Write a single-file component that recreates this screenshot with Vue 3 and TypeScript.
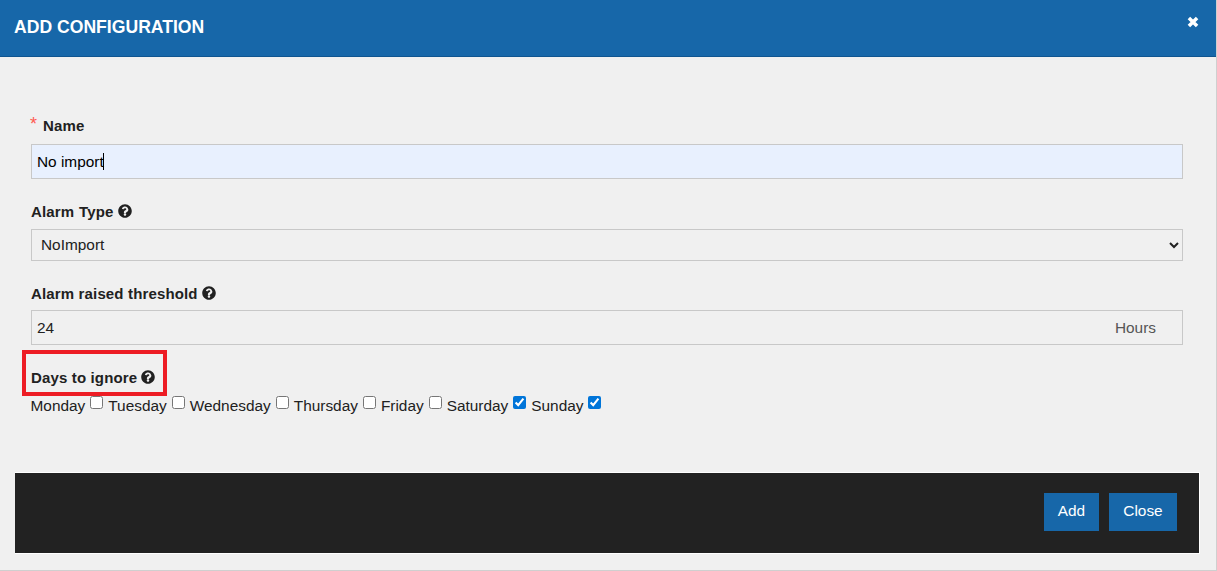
<script setup lang="ts">
import { ref } from 'vue';

const days = ref([
  { name: 'Monday', ignored: false },
  { name: 'Tuesday', ignored: false },
  { name: 'Wednesday', ignored: false },
  { name: 'Thursday', ignored: false },
  { name: 'Friday', ignored: false },
  { name: 'Saturday', ignored: true },
  { name: 'Sunday', ignored: true },
]);
const helpPath =
  'M504 256c0 137-111 248-248 248S8 393 8 256 119 8 256 8s248 111 248 248zM262.700 90c-54.500 0-89.300 23-116.500 63.800-3.500 5.300-2.400 12.400 2.700 16.300l34.700 26.300c5.200 3.900 12.600 3 16.700-2.100 17.900-22.700 30.100-35.800 57.300-35.800 20.400 0 45.700 13.100 45.700 33 0 15-12.400 22.700-32.600 34-23.600 13.200-54.800 29.700-54.800 70.900V320c0 6.600 5.400 12 12 12h56c6.600 0 12-5.400 12-12v-1.300c0-28.600 83.500-29.800 83.500-107.100C380 153.300 319.600 90 262.700 90zM256 339c-25.500 0-46.200 20.700-46.200 46.200 0 25.500 20.700 46.200 46.200 46.200s46.200-20.700 46.200-46.200c0-25.500-20.700-46.200-46.200-46.200z';
</script>

<template>
  <div class="modal">
    <header class="modal-header">
      <h1>ADD CONFIGURATION</h1>
      <svg class="close-icon" viewBox="0 0 12 12" aria-hidden="true">
        <path d="M2.500 2.500l7 7M9.500 2.500l-7 7" />
      </svg>
    </header>

    <form class="modal-body" @submit.prevent>
      <div class="field field-name">
        <label class="label"><span class="required">*</span>Name</label>
        <div class="name-wrap">
          <input class="input name-input" type="text" value="No import" readonly />
          <span class="caret"></span>
        </div>
      </div>

      <div class="field field-type">
        <label class="label">
          <span class="wide">Alarm Type</span>
          <svg class="help" viewBox="0 0 512 512" aria-hidden="true"><path :d="helpPath" /></svg>
        </label>
        <select class="input select">
          <option>NoImport</option>
        </select>
      </div>

      <div class="field field-threshold">
        <label class="label">
          Alarm raised threshold
          <svg class="help" viewBox="0 0 512 512" aria-hidden="true"><path :d="helpPath" /></svg>
        </label>
        <div class="input threshold">
          <span>24</span>
          <span class="unit">Hours</span>
        </div>
      </div>

      <div class="field field-days">
        <label class="label days-label">
          Days to ignore
          <svg class="help" viewBox="0 0 512 512" aria-hidden="true"><path :d="helpPath" /></svg>
          <span class="highlight"></span>
        </label>
        <div class="days">
          <label v-for="day in days" :key="day.name" class="day">
            {{ day.name }}
            <input v-model="day.ignored" type="checkbox" />
          </label>
        </div>
      </div>
    </form>

    <footer class="modal-footer">
      <button class="btn btn-add" type="button">Add</button>
      <button class="btn btn-close" type="button">Close</button>
    </footer>
  </div>
</template>

<style>
html,
body {
  margin: 0;
  background: #f0f0f0;
}
</style>

<style scoped>
.modal {
  box-sizing: border-box;
  width: 1217px;
  height: 571px;
  display: flex;
  flex-direction: column;
  background: #f0f0f0;
  border-right: 1px solid #cfcfcf;
  border-bottom: 1px solid #cfcfcf;
  color: #212121;
  font-family: 'Liberation Sans', Arial, sans-serif;
  font-size: 15.4px;
  overflow: hidden;
}
.modal-header {
  box-sizing: border-box;
  height: 57px;
  flex: none;
  margin-right: -1px;
  padding: 0 17px 0 14px;
  display: flex;
  align-items: center;
  justify-content: space-between;
  background: #1767a9;
  border-bottom: 1px solid #0f5590;
}
.modal-header h1 {
  margin: 0 0 2px;
  color: #fff;
  font-size: 17.6px;
  font-weight: 700;
  line-height: 20px;
}
.close-icon {
  width: 14px;
  height: 14px;
  margin-top: -13px;
  stroke: #fff;
  stroke-width: 3;
  fill: none;
}
.modal-body {
  flex: 1;
  padding: 0 33px 0 31px;
}
.field {
  display: flex;
  flex-direction: column;
}
.field-name {
  margin-top: 59px;
}
.field-type {
  margin-top: 23px;
}
.field-threshold {
  margin-top: 23px;
}
.field-days {
  margin-top: 23px;
}
.label {
  position: relative;
  display: flex;
  align-items: center;
  gap: 4px;
  height: 18px;
  margin-bottom: 9px;
  font-size: 15px;
  font-weight: 700;
  letter-spacing: 0.15px;
}
.field-name .label {
  margin-bottom: 10px;
}
.field-threshold .label {
  margin-bottom: 8px;
}
.wide {
  word-spacing: 0.5px;
}
.required {
  margin: -2px 0 0 -1px;
  width: 9px;
  color: #ff5a52;
  font-weight: 400;
  font-size: 18px;
}
.help {
  width: 14px;
  height: 14px;
  fill: #212121;
}
.input {
  box-sizing: border-box;
  width: 100%;
  border: 1px solid #c8c8c8;
  background: #f0f0f0;
  color: #212121;
  font-family: inherit;
  font-size: 15.4px;
  outline: none;
}
.name-wrap {
  position: relative;
}
.name-input {
  display: block;
  height: 35px;
  padding: 0 5px;
  background: #e8f0fe;
  color: #000;
}
.caret {
  position: absolute;
  left: 72px;
  top: 9px;
  width: 1px;
  height: 17px;
  background: #000;
}
.select {
  display: block;
  height: 32px;
  padding: 0 5px 2px;
  border-radius: 0;
}
.threshold {
  display: flex;
  align-items: center;
  justify-content: space-between;
  height: 35px;
  padding: 0 26px 0 5px;
}
.unit {
  color: #555;
}
.days-label {
  margin-bottom: 10px;
}
.highlight {
  position: absolute;
  left: -9px;
  top: -18px;
  width: 145px;
  height: 46px;
  box-sizing: border-box;
  border: 4px solid #ed1c24;
  pointer-events: none;
}
.days {
  display: flex;
  height: 19px;
  margin-left: -0.5px;
  gap: 5px;
  font-size: 15.4px;
}
.day {
  display: flex;
  align-items: center;
  gap: 5px;
  white-space: nowrap;
}
.day input {
  width: 13px;
  height: 13px;
  margin: -7px 0 0;
  accent-color: #0075d9;
}
.modal-footer {
  flex: none;
  box-sizing: border-box;
  width: 1185px;
  height: 82px;
  margin: 0 0 16px 15px;
  padding: 20px 22px 0 0;
  display: flex;
  justify-content: flex-end;
  align-items: flex-start;
  gap: 10px;
  background: #222;
  border-top: 1px solid #fff;
  border-right: 1px solid #fff;
  border-bottom: 1px solid #fff;
}
.btn {
  height: 38px;
  padding: 0 0 2px;
  border: none;
  background: #1767a9;
  color: #fff;
  font-family: inherit;
  font-size: 15.4px;
}
.btn-add {
  width: 55px;
}
.btn-close {
  width: 68px;
}
</style>
